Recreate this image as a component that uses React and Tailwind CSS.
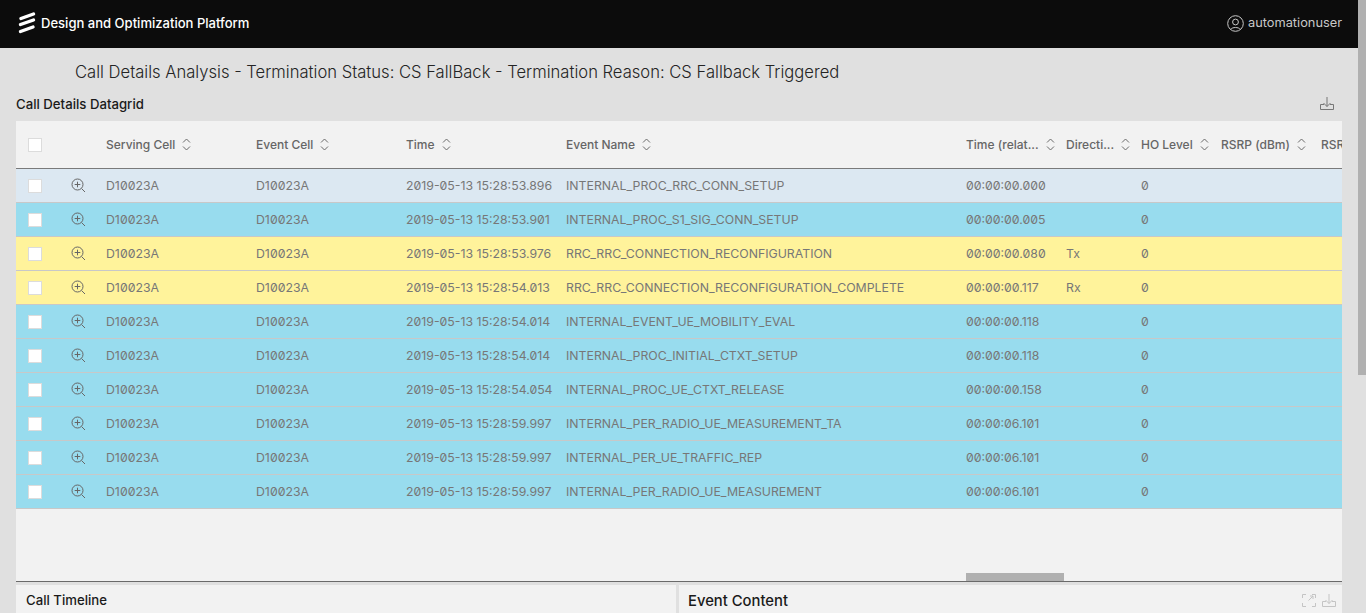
import React from 'react';

const ui = "font-['Inter','Noto_Sans',sans-serif]";

const columns = [
  { label: 'Serving Cell', key: 'cell', width: 'w-[150px]' },
  { label: 'Event Cell', key: 'cell', width: 'w-[150px]' },
  { label: 'Time', key: 'time', width: 'w-[160px]' },
  { label: 'Event Name', key: 'name', width: 'w-[400px]' },
  { label: 'Time (relat...', key: 'rel', width: 'w-[100px]' },
  { label: 'Directi...', key: 'dir', width: 'w-[75px]' },
  { label: 'HO Level', key: 'ho', width: 'w-[80px]' },
  { label: 'RSRP (dBm)', key: 'rsrp', width: 'w-[100px]' },
  { label: 'RSRQ (dB)', key: 'rsrq', width: 'w-[100px]' },
];

const rows = [
  { time: '2019-05-13 15:28:53.896', name: 'INTERNAL_PROC_RRC_CONN_SETUP', rel: '00:00:00.000', dir: '', bg: 'bg-[#dce8f2]' },
  { time: '2019-05-13 15:28:53.901', name: 'INTERNAL_PROC_S1_SIG_CONN_SETUP', rel: '00:00:00.005', dir: '', bg: 'bg-[#98dcee]' },
  { time: '2019-05-13 15:28:53.976', name: 'RRC_RRC_CONNECTION_RECONFIGURATION', rel: '00:00:00.080', dir: 'Tx', bg: 'bg-[#fff39b]' },
  { time: '2019-05-13 15:28:54.013', name: 'RRC_RRC_CONNECTION_RECONFIGURATION_COMPLETE', rel: '00:00:00.117', dir: 'Rx', bg: 'bg-[#fff39b]' },
  { time: '2019-05-13 15:28:54.014', name: 'INTERNAL_EVENT_UE_MOBILITY_EVAL', rel: '00:00:00.118', dir: '', bg: 'bg-[#98dcee]' },
  { time: '2019-05-13 15:28:54.014', name: 'INTERNAL_PROC_INITIAL_CTXT_SETUP', rel: '00:00:00.118', dir: '', bg: 'bg-[#98dcee]' },
  { time: '2019-05-13 15:28:54.054', name: 'INTERNAL_PROC_UE_CTXT_RELEASE', rel: '00:00:00.158', dir: '', bg: 'bg-[#98dcee]' },
  { time: '2019-05-13 15:28:59.997', name: 'INTERNAL_PER_RADIO_UE_MEASUREMENT_TA', rel: '00:00:06.101', dir: '', bg: 'bg-[#98dcee]' },
  { time: '2019-05-13 15:28:59.997', name: 'INTERNAL_PER_UE_TRAFFIC_REP', rel: '00:00:06.101', dir: '', bg: 'bg-[#98dcee]' },
  { time: '2019-05-13 15:28:59.997', name: 'INTERNAL_PER_RADIO_UE_MEASUREMENT', rel: '00:00:06.101', dir: '', bg: 'bg-[#98dcee]' },
];

function Logo() {
  return (
    <svg width="18" height="22" viewBox="0 0 18 22" className="shrink-0">
      <g stroke="#fff" strokeWidth="3.4" strokeLinecap="round" fill="none">
        <path d="M3 6.5 L15.5 2" />
        <path d="M2.5 12.5 L15.5 8" />
        <path d="M2.5 19.5 L15 15" />
      </g>
    </svg>
  );
}

function UserIcon() {
  return (
    <svg width="17" height="17" viewBox="0 0 17 17" fill="none" stroke="#c8c8c8" strokeWidth="1">
      <circle cx="8.5" cy="8.5" r="7.8" />
      <circle cx="8.5" cy="7" r="2.9" />
      <path d="M4 14.2 C5 12 12 12 13 14.2" />
    </svg>
  );
}

function SortIcon() {
  return (
    <svg width="9" height="13" viewBox="0 0 9 13" fill="none" stroke="#6a6a6a" strokeWidth="1" className="shrink-0">
      <path d="M1 4.5 L4.5 1 L8 4.5" />
      <path d="M1 8.5 L4.5 12 L8 8.5" />
    </svg>
  );
}

function ZoomIcon() {
  return (
    <svg width="15" height="15" viewBox="0 0 15 15" fill="none" stroke="#666" strokeWidth="1">
      <circle cx="6.5" cy="6.5" r="5.5" />
      <path d="M6.5 3.7 V9.3 M3.7 6.5 H9.3" />
      <path d="M10.6 10.6 L14 14" />
    </svg>
  );
}

function DownloadIcon({ color = '#777' }) {
  return (
    <svg width="14" height="13" viewBox="0 0 14 13" fill="none" stroke={color} strokeWidth="1">
      <path d="M4 7.5 H0.5 V12.5 H13.5 V7.5 H10" />
      <path d="M7 0 V9.5 M3.5 6 L7 9.5 L10.5 6" />
    </svg>
  );
}

function ExpandIcon() {
  return (
    <svg width="14" height="13" viewBox="0 0 14 13" fill="none" stroke="#c4c4c4" strokeWidth="1">
      <path d="M0.5 4 V0.5 H4 M10 0.5 H13.5 V4 M0.5 9 V12.5 H4 M10 12.5 H13.5 V9" />
      <path d="M6.5 6.5 L11 2 M8 2 H11 V5" />
    </svg>
  );
}

function Checkbox() {
  return <span className="block w-[14px] h-[14px] bg-white border border-[#dcdcdc]" />;
}

export default function App() {
  return (
    <div className={`h-[613px] overflow-hidden flex bg-[#e0e0e0] ${ui}`}>
      <div className="flex-1 min-w-0 flex flex-col">
        <header className="h-12 shrink-0 bg-[#0c0c0c] flex items-center justify-between pl-[18px] pr-[16px] pb-[2px]">
          <div className="flex items-center gap-[5px]">
            <Logo />
            <span className="text-white text-[13.05px] font-medium pt-[1px]">Design and Optimization Platform</span>
          </div>
          <div className="flex items-center gap-[4px] text-[#c8c8c8] text-[12.8px]">
            <UserIcon />
            <span>automationuser</span>
          </div>
        </header>

        <div className="px-4 flex-1 min-h-0 flex flex-col">
          <h1 className="pl-[59px] pt-[14px] h-[38px] text-[16.6px] leading-5 font-light text-[#242424]">
            Call Details Analysis - Termination Status: CS FallBack - Termination Reason: CS Fallback Triggered
          </h1>
          <div className="h-[35px] flex items-center justify-between pr-[8px]">
            <span className="text-[13.2px] font-medium text-[#1a1a1a] pt-[2px]">Call Details Datagrid</span>
            <DownloadIcon />
          </div>

          <section className="relative h-[461px] shrink-0 bg-[#f2f2f2] border-b border-[#6a6a6a] overflow-hidden">
            <div className="h-[48px] flex items-center border-b border-[#7a7a7a] whitespace-nowrap">
              <div className="w-[50px] shrink-0 pl-3"><Checkbox /></div>
              <div className="w-[30px] shrink-0" />
              {columns.map((col) => (
                <div key={col.label} className={`${col.width} shrink-0 pl-[10px] flex items-center gap-[7px] text-[12px] font-medium text-[#666]`}>
                  <span>{col.label}</span>
                  <SortIcon />
                </div>
              ))}
            </div>
            {rows.map((row) => (
              <div key={row.time + row.name} className={`h-[34px] flex items-center border-b border-[#c8c8c8] whitespace-nowrap text-[12.3px] text-[#777] ${row.bg}`}>
                <div className="w-[50px] shrink-0 pl-3"><Checkbox /></div>
                <div className="w-[30px] shrink-0 ml-[5px] -mr-[5px] flex justify-start"><ZoomIcon /></div>
                {columns.map((col) => (
                  <div key={col.label} className={`${col.width} shrink-0 pl-[10px] pt-[1px] slashed-zero`}>
                    {col.key === 'cell' && 'D10023A'}
                    {col.key === 'ho' && '0'}
                    {row[col.key]}
                  </div>
                ))}
              </div>
            ))}
            <div className="absolute left-[950px] bottom-0 w-[98px] h-[8px] bg-[#b0b0b0]" />
          </section>

          <div className="flex gap-[3px] mt-[3px] flex-1 min-h-0">
            <div className="w-[660px] bg-[#f2f2f2] pl-[10px] pt-[6px] text-[13.2px] font-medium text-[#1a1a1a]">Call Timeline</div>
            <div className="flex-1 bg-[#f2f2f2] pl-[9px] pr-[6px] pt-[5px] flex items-start justify-between">
              <span className="text-[14.8px] font-medium text-[#1a1a1a]">Event Content</span>
              <div className="flex items-center gap-[6px] mt-[4px]">
                <ExpandIcon />
                <DownloadIcon color="#c4c4c4" />
              </div>
            </div>
          </div>
        </div>
      </div>

      <div className="w-[8px] shrink-0 bg-[#e0e0e0]">
        <div className="h-[375px] bg-[#b0b0b0]" />
      </div>
    </div>
  );
}
